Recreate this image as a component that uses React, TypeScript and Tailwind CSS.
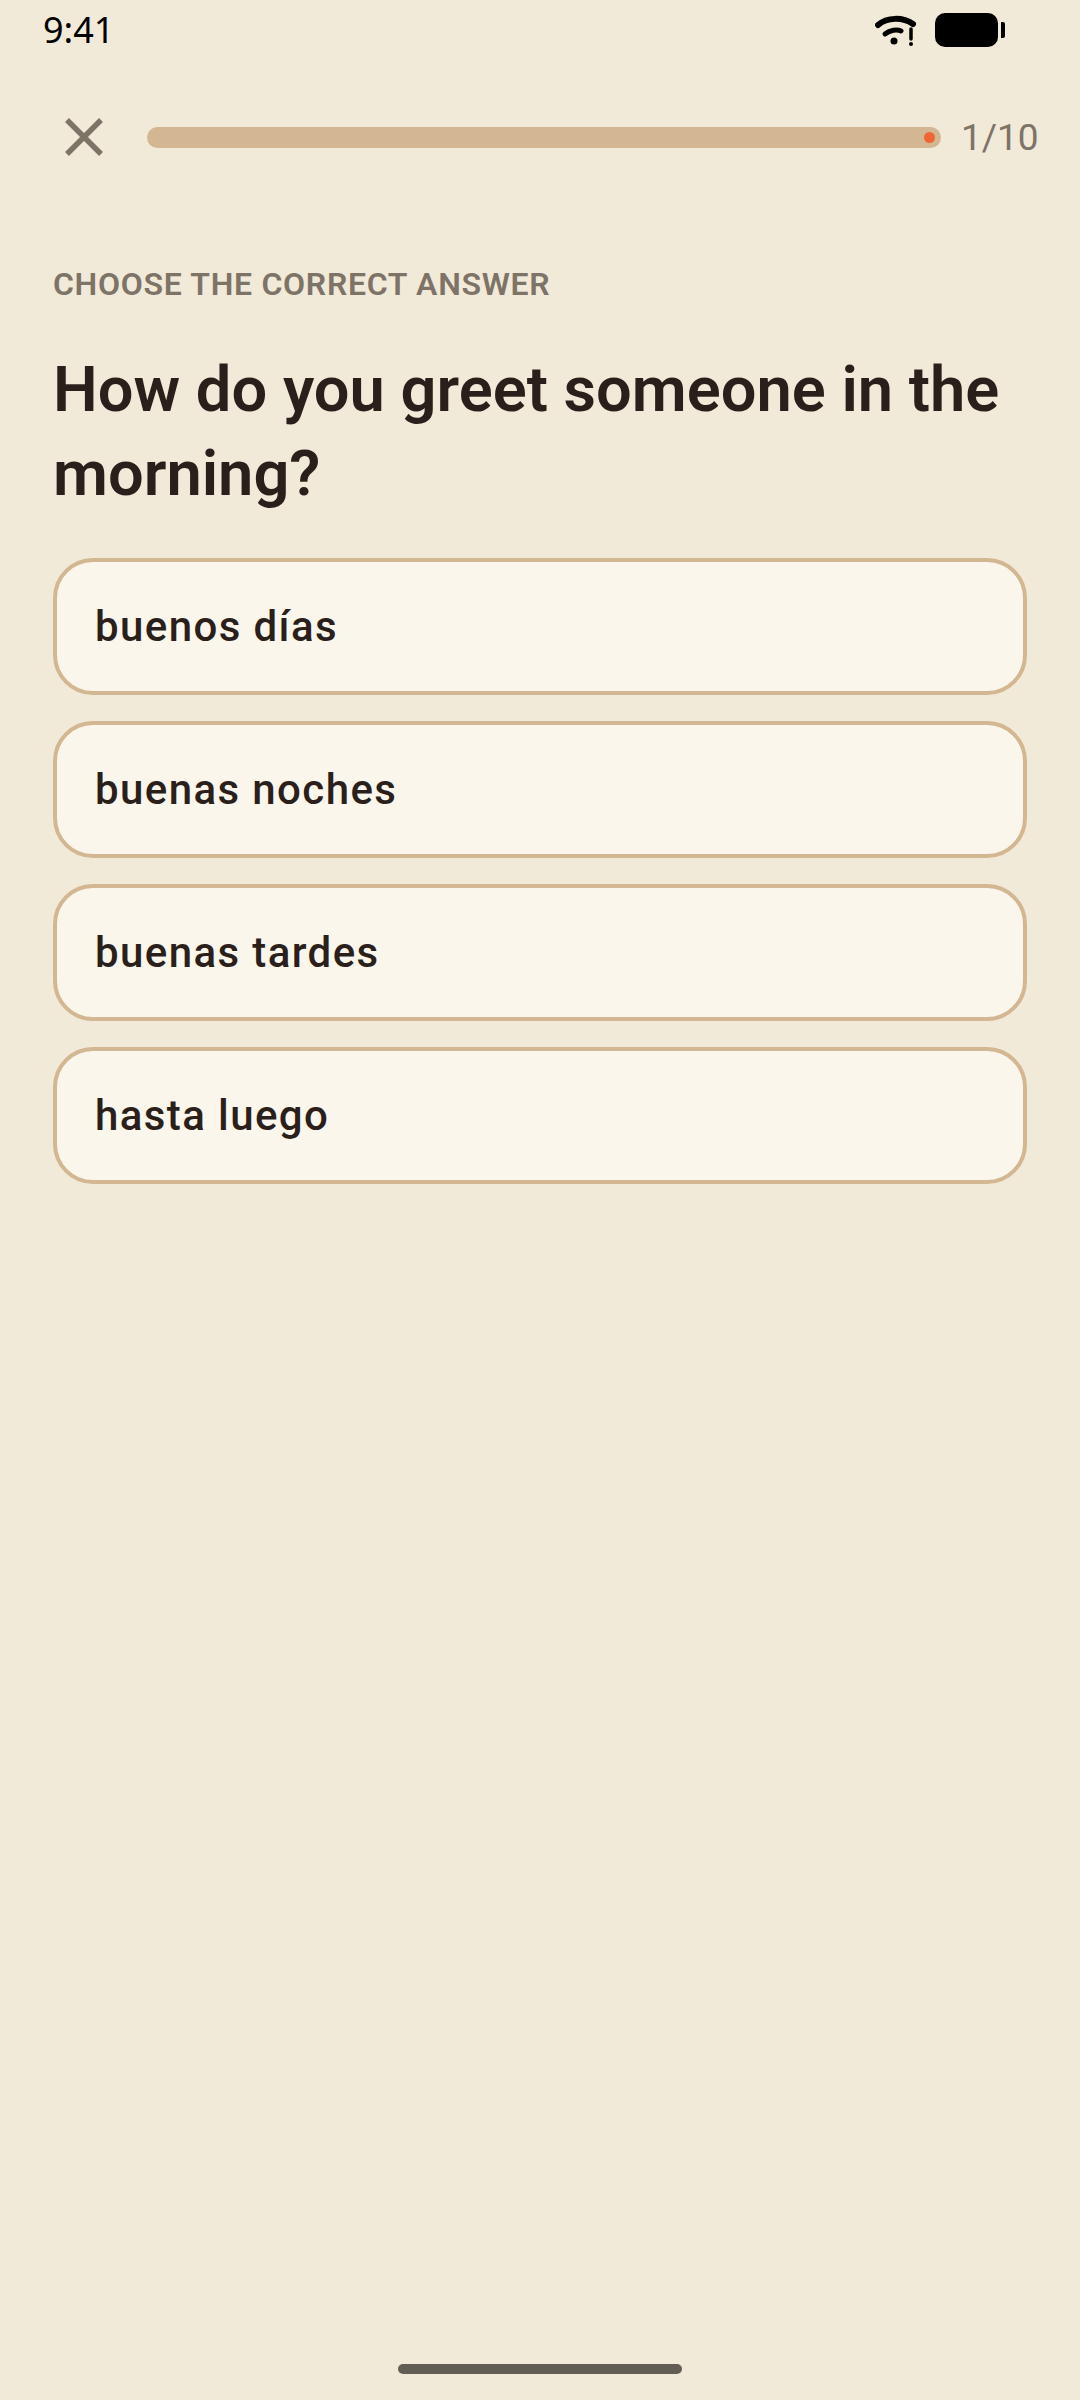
const options = ['buenos días', 'buenas noches', 'buenas tardes', 'hasta luego'];

export default function App() {
  return (
    <div className="flex h-[2400px] w-[1080px] flex-col overflow-hidden bg-[#f2ead8] font-['Roboto',sans-serif]">
      {/* Status bar */}
      <div className="flex h-[60px] shrink-0 items-center justify-between pl-[43px] pr-[75px]">
        <span className="font-['Noto_Sans',sans-serif] text-[36px] leading-[60px] text-black">9:41</span>
        <div className="flex items-center gap-[18px]">
          <svg width="42" height="34" viewBox="0 0 42 34" className="mt-[-1px]">
            <path d="M3 12 C12 4 28 4 38 11" fill="none" stroke="#000" strokeWidth="6" strokeLinecap="round" />
            <path d="M10 21 C15 17 22 16 26 18" fill="none" stroke="#000" strokeWidth="5" strokeLinecap="round" />
            <circle cx="19" cy="28" r="3.5" fill="#000" />
            <path d="M36 16 V26" stroke="#000" strokeWidth="3.5" strokeLinecap="round" />
            <circle cx="36" cy="31" r="2" fill="#000" />
          </svg>
          <div className="flex items-center gap-[3px]">
            <div className="h-[34px] w-[63px] rounded-[10px] bg-black" />
            <div className="h-[16px] w-[4px] rounded-r-[2px] bg-black" />
          </div>
        </div>
      </div>

      {/* Progress header */}
      <div className="mt-[47px] flex h-[60px] shrink-0 items-center pl-[65px]">
        <svg width="38" height="38" viewBox="0 0 38 38" className="shrink-0">
          <path d="M2 2 L36 36 M36 2 L2 36" stroke="#7d7367" strokeWidth="5.5" fill="none" />
        </svg>
        <div className="ml-[44px] flex h-[21px] w-[794px] items-center justify-end rounded-full bg-[#d3b692] pr-[6px]">
          <div className="h-[11px] w-[11px] rounded-full bg-[#ef6535]" />
        </div>
        <span className="ml-[20px] mt-[2px] text-[37px] leading-[60px] text-[#7d7367]">1/10</span>
      </div>

      {/* Question */}
      <div className="mt-[94px] flex flex-col pl-[53px] pr-[53px]">
        <p className="text-[32px] font-semibold leading-[46px] tracking-[0.7px] text-[#7d7367]">CHOOSE THE CORRECT ANSWER</p>
        <h1 className="mt-[40px] text-[63.2px] font-semibold leading-[84px] text-[#2a1f1a]">How do you greet someone in the morning?</h1>
        <div className="mt-[43px] flex flex-col gap-[26px]">
          {options.map(option => (
            <div key={option} className="flex h-[137px] items-center rounded-[40px] border-4 border-[#d3b692] bg-[#faf6ec] pl-[38px]">
              <span className="text-[42px] font-medium tracking-[1.4px] text-[#2a1f1a]">{option}</span>
            </div>
          ))}
        </div>
      </div>

      {/* Home indicator */}
      <div className="mt-auto mb-[26px] flex justify-center">
        <div className="h-[10px] w-[284px] rounded-full bg-[#625e54]" />
      </div>
    </div>
  );
}
